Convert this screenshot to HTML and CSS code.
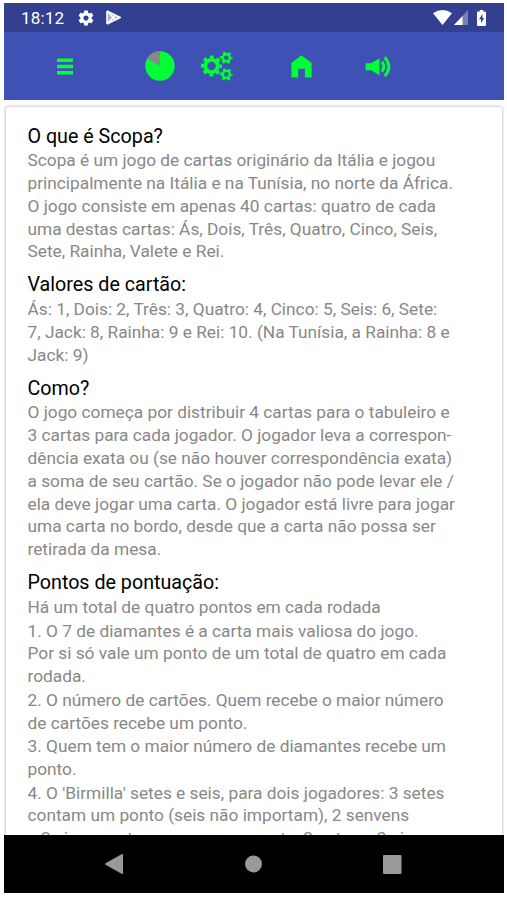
FILE: index.html
```html
<!DOCTYPE html>
<html lang="pt">
<head>
	<meta charset="utf-8">
	<title>Scopa</title>
	<link rel="stylesheet" href="styles.css">
</head>
<body>
	<div class="phone">
		<!-- status bar -->
		<div class="status">
			<span class="time">18:12</span>
			<svg class="status-gear" width="18" height="18" viewBox="0 0 24 24"><path d="M19.43 12.98c.04-.32.07-.64.07-.98s-.03-.66-.07-.98l2.11-1.65c.19-.15.24-.42.12-.64l-2-3.46c-.12-.22-.39-.3-.61-.22l-2.49 1c-.52-.4-1.08-.73-1.69-.98l-.38-2.65C14.46 2.18 14.25 2 14 2h-4c-.25 0-.46.18-.49.42l-.38 2.65c-.61.25-1.17.59-1.69.98l-2.49-1c-.23-.09-.49 0-.61.22l-2 3.46c-.13.22-.07.49.12.64l2.11 1.65c-.04.32-.07.65-.07.98s.03.66.07.98l-2.11 1.65c-.19.15-.24.42-.12.64l2 3.46c.12.22.39.3.61.22l2.49-1c.52.4 1.08.73 1.69.98l.38 2.65c.03.24.24.42.49.42h4c.25 0 .46-.18.49-.42l.38-2.65c.61-.25 1.17-.59 1.69-.98l2.49 1c.23.09.49 0 .61-.22l2-3.46c.12-.22.07-.49-.12-.64l-2.11-1.65zM12 15.5c-1.93 0-3.5-1.57-3.5-3.5s1.57-3.5 3.5-3.5 3.5 1.57 3.5 3.5-1.57 3.5-3.5 3.5z"/></svg>
			<svg class="status-play" width="15" height="15" viewBox="0 0 15 15"><path d="M1 1v13L14 7.500z" fill-opacity=".6"/><path d="M1 1v13M1 1l13 6.500L1 14M1 1l8.500 9M1 14l8.500-9" fill="none" stroke="#fff" stroke-width="1.600"/></svg>
			<span class="status-right">
				<svg width="19" height="15" viewBox="0 0 19 15"><path d="M0 3.300Q9.500-3.300 19 3.300L9.500 15z"/></svg>
				<svg width="14" height="15" viewBox="0 0 14 15"><path d="M14 0v15H0z" fill-opacity=".35"/><path d="M8.500 6v9H0z"/></svg>
				<svg class="battery" width="9" height="16" viewBox="0 0 9 16"><path fill-rule="evenodd" d="M2.800 0h3.400v1.500H8q1 0 1 1V15q0 1-1 1H1q-1 0-1-1V2.500q0-1 1-1h1.800zM5.500 4L2 9.300h2v4L7.200 8H5.500z"/></svg>
			</span>
		</div>
		<!-- toolbar -->
		<div class="toolbar">
			<svg class="icon" width="16" height="17" viewBox="0 0 16 17"><path d="M0 .5h16v3.500H0zM0 6.800h16v3.500H0zM0 13h16v3.500H0z"/></svg>
			<svg class="icon" width="30" height="30" viewBox="0 0 30 30"><circle cx="15" cy="15" r="14.700"/><path class="slice" d="M15 15V.3A14.700 14.700 0 0 0 2.300 7.700z"/></svg>
			<svg class="icon" width="32" height="30" viewBox="0 0 32 30">
				<g fill="none" stroke="#0f3">
					<circle cx="10.500" cy="15" r="6.200" stroke-width="3.800"/>
					<circle cx="10.500" cy="15" r="8.900" stroke-width="3.200" stroke-dasharray="3.800 3.190" stroke-dashoffset="1.900"/>
					<circle cx="25.300" cy="6.800" r="3.500" stroke-width="2.400"/>
					<circle cx="25.300" cy="6.800" r="5.200" stroke-width="2.200" stroke-dasharray="2.800 2.645" stroke-dashoffset="1.400"/>
					<circle cx="25.300" cy="23.400" r="3.500" stroke-width="2.400"/>
					<circle cx="25.300" cy="23.400" r="5.200" stroke-width="2.200" stroke-dasharray="2.800 2.645" stroke-dashoffset="1.400"/>
				</g>
			</svg>
			<svg class="icon" width="21" height="23" viewBox="0 0 21 23"><path d="M10.500.3L20.600 8v14.500h-6.700V13.800H7.200v8.700H.4V8z"/></svg>
			<svg class="icon" width="26" height="21" viewBox="0 0 26 21"><path d="M.6 7.200H6l8.500-5v17L6 14.200H.6z"/><path class="wave" d="M16.800 5.800q4 4.900 0 9.800M19.800 1.300q8 9.400 0 18.800"/></svg>
		</div>
		<!-- rules -->
		<div class="content">
			<div class="card">
				<h2>O que é Scopa?</h2>
				<p>Scopa é um jogo de cartas originário da Itália e jogou<br>principalmente na Itália e na Tunísia, no norte da África.<br>O jogo consiste em apenas 40 cartas: quatro de cada<br>uma destas cartas: Ás, Dois, Três, Quatro, Cinco, Seis,<br>Sete, Rainha, Valete e Rei.</p>
				<h2>Valores de cartão:</h2>
				<p>Ás: 1, Dois: 2, Três: 3, Quatro: 4, Cinco: 5, Seis: 6, Sete:<br>7, Jack: 8, Rainha: 9 e Rei: 10. (Na Tunísia, a Rainha: 8 e<br>Jack: 9)</p>
				<h2>Como?</h2>
				<p>O jogo começa por distribuir 4 cartas para o tabuleiro e<br>3 cartas para cada jogador. O jogador leva a correspon-<br>dência exata ou (se não houver correspondência exata)<br>a soma de seu cartão. Se o jogador não pode levar ele /<br>ela deve jogar uma carta. O jogador está livre para jogar<br>uma carta no bordo, desde que a carta não possa ser<br>retirada da mesa.</p>
				<h2>Pontos de pontuação:</h2>
				<p>Há um total de quatro pontos em cada rodada</p>
				<p>1. O 7 de diamantes é a carta mais valiosa do jogo.<br>Por si só vale um ponto de um total de quatro em cada<br>rodada.</p>
				<p>2. O número de cartões. Quem recebe o maior número<br>de cartões recebe um ponto.</p>
				<p>3. Quem tem o maior número de diamantes recebe um<br>ponto.</p>
				<p>4. O 'Birmilla' setes e seis, para dois jogadores: 3 setes<br>contam um ponto (seis não importam), 2 senvens<br>e 2 sixes contam apenas um ponto, 2 setes e 3 sixes</p>
			</div>
		</div>
		<!-- navigation buttons -->
		<div class="nav">
			<svg width="18" height="20" viewBox="0 0 18 20"><path d="M17 0q1 0 1 1v18q0 1-1 1L.5 10.800q-.9-.8 0-1.600z"/></svg>
			<svg width="18" height="18" viewBox="0 0 18 18"><circle cx="9.500" cy="9" r="8.500"/></svg>
			<svg width="19" height="19" viewBox="0 0 19 19"><rect width="18.500" height="19" rx="1"/></svg>
		</div>
	</div>
</body>
</html>
```
FILE: styles.css
```css
* {
	margin: 0;
	padding: 0;
	box-sizing: border-box;
}

body {
	background: #fff;
	font-family: Roboto, sans-serif;
	overflow: hidden;
}

svg {
	display: block;
	flex: none;
}

.phone {
	width: 500px;
	height: 890px;
	margin: 3px 0 0 4px;
	display: flex;
	flex-direction: column;
}

.status {
	height: 29px;
	flex: none;
	display: flex;
	align-items: center;
	padding: 0 18px 0 17px;
	background: #32408f;
	color: #fff;
	fill: #fff;
}
.time {
	width: 43px;
	font-size: 17px;
	line-height: 29px;
	letter-spacing: 0.2px;
	padding-top: 1px;
}
.status-gear {
	margin-left: 13px;
}
.status-play {
	margin-left: 11px;
}
.status-right {
	margin-left: auto;
	display: flex;
	gap: 2px;
}
.battery {
	margin-left: 7px;
}

.toolbar {
	height: 68px;
	flex: none;
	display: flex;
	align-items: center;
	padding-left: 53px;
	background: #3f51b5;
}
.icon {
	fill: #0f3;
	margin-right: 72px;
}
.icon:nth-child(2) {
	margin-right: 26px;
}
.icon:nth-child(3) {
	margin-right: 58px;
}
.icon:nth-child(4) {
	margin-right: 53px;
}
.slice {
	fill: #888;
}
.wave {
	fill: none;
	stroke: #0f3;
	stroke-width: 3px;
}

.content {
	flex: 1;
	min-height: 0;
	overflow: hidden;
	padding: 7px 2px 0;
	background: #fefefe;
}
.card {
	height: 760px;
	padding: 16.5px 21.5px 0;
	background: #fff;
	border-radius: 3px;
	box-shadow: 0 0 3px 1px rgba(0,0,0,0.2);
}
.card h2 {
	font-size: 19.7px;
	font-weight: normal;
	line-height: 26px;
	color: #000;
	white-space: nowrap;
	margin-bottom: -0.4px;
}
.card p {
	font-size: 17.3px;
	line-height: 22.8px;
	color: #888;
	white-space: nowrap;
	padding-bottom: 0.8px;
}
.card p + h2 {
	margin-top: 8.6px;
}

.nav {
	height: 58px;
	flex: none;
	display: flex;
	align-items: center;
	justify-content: space-between;
	padding: 0 102px 0 101px;
	background: #000;
	fill: #999;
}
```
